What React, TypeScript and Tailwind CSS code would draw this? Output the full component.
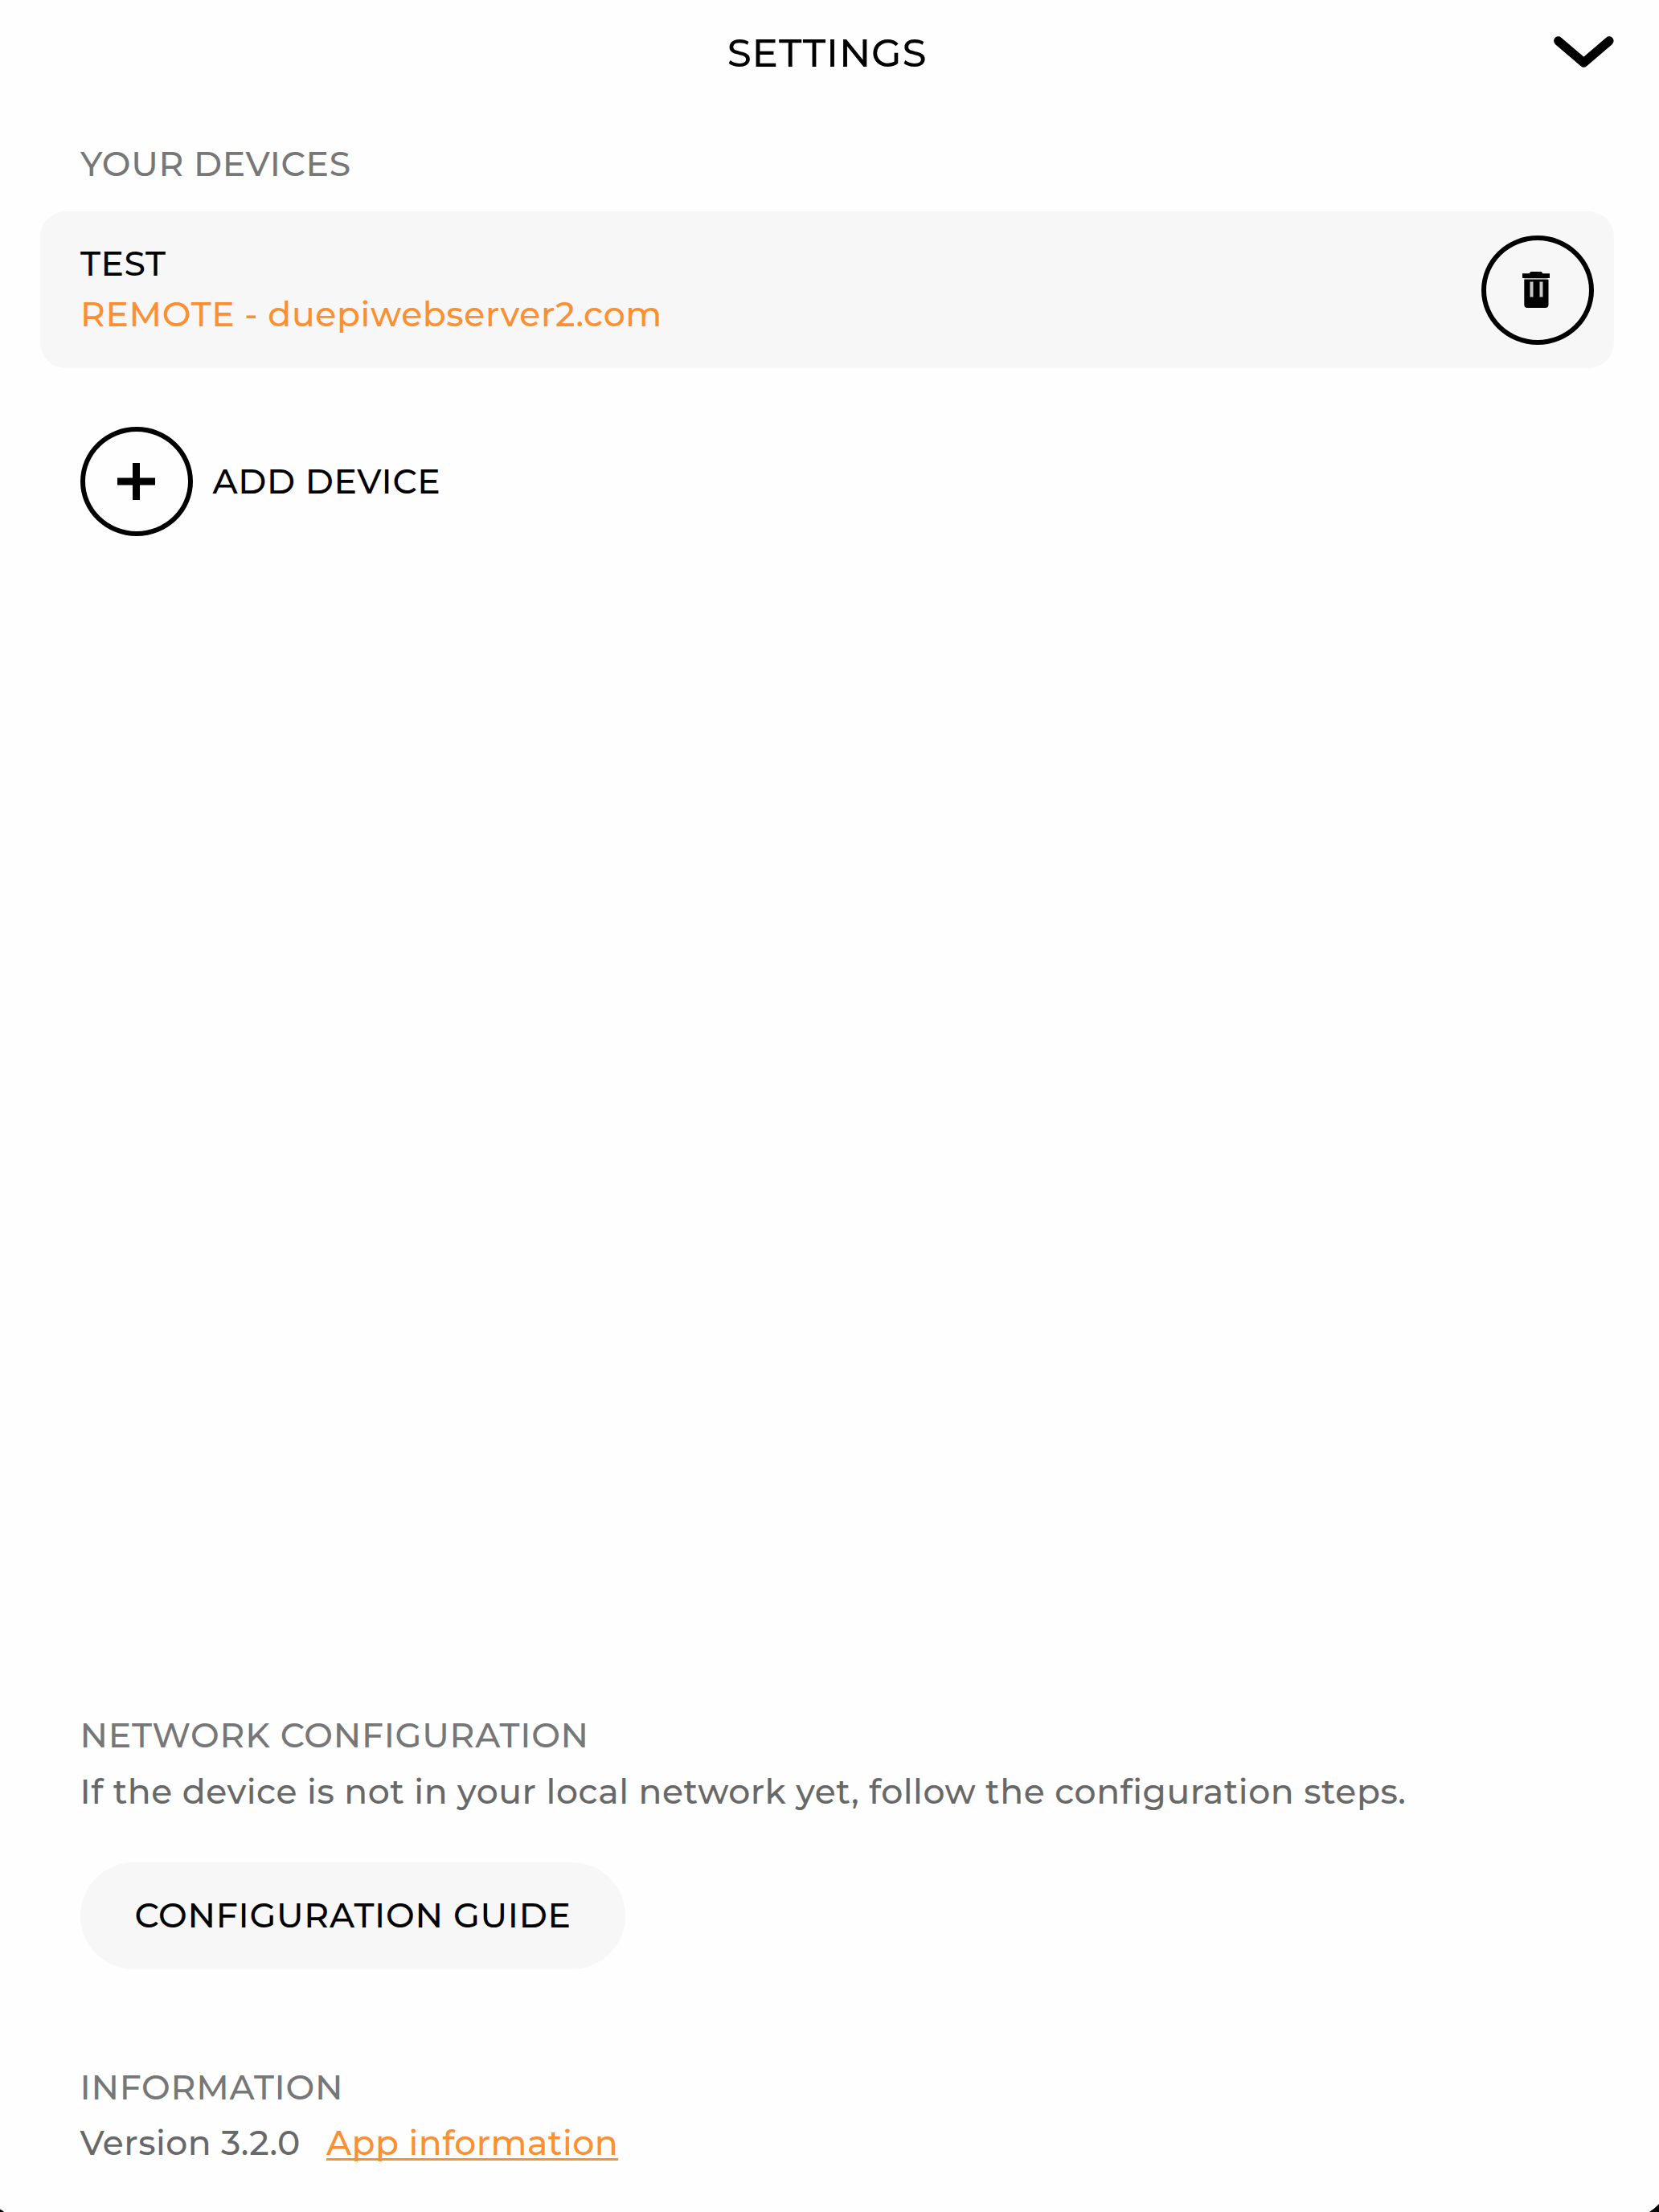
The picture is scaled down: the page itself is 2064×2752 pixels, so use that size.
import type { ReactNode } from 'react'

import clsx from 'clsx'

const devices = [
  { name: 'TEST', connection: 'REMOTE', host: 'duepiwebserver2.com' },
]

const ChevronDown = () => (
  <svg width="75" height="40" viewBox="0 0 75 40" fill="none">
    <path
      d="M5.7 5.9 37.4 33 69 5.9"
      stroke="black"
      strokeWidth="11.2"
      strokeLinecap="round"
      strokeLinejoin="round"
    />
  </svg>
)

const TrashIcon = () => (
  <svg width="34" height="45" viewBox="0 0 34 45" className="mr-[5px]">
    <path d="M10.5 0h13l2 2.3H34V8H0V2.3h8.5z" />
    <path d="M2.5 8h29v2h-29z" fill="#b0b0b0" />
    <path d="M2.3 9.7h30.2V41a4 4 0 0 1-4 4H6.3a4 4 0 0 1-4-4z" />
    <path d="M9.5 12.5h4v19h-4zM21.5 12.5h4v19h-4z" fill="#c8c8c8" />
  </svg>
)

const PlusIcon = () => (
  <svg width="47" height="46" viewBox="0 0 47 46">
    <path d="M19 0h9v18.5h19v9H28V46h-9V27.5H0v-9h19z" />
  </svg>
)

const RoundButton = ({ label, children }: { label: string; children: ReactNode }) => (
  <button
    aria-label={label}
    className="flex h-[136px] w-[140px] shrink-0 items-center justify-center rounded-[50%] border-[6px] border-black"
  >
    {children}
  </button>
)

const Heading = ({ className, children }: { className?: string; children: ReactNode }) => (
  <h2 className={clsx('text-[#777]', className)}>{children}</h2>
)

export default function App() {
  return (
    <div className="relative flex h-[2752px] w-[2064px] flex-col overflow-hidden bg-[#fefefe] font-['Montserrat','Inter',sans-serif] text-[42.5px] font-medium text-black">
      <header className="grid h-[132px] grid-cols-[1fr_auto_1fr] items-center pr-14 pl-[50px]">
        <h1 className="col-start-2 pt-px text-[48.5px] tracking-[0.83px]">SETTINGS</h1>
        <button aria-label="Close" className="justify-self-end pb-[3px]">
          <ChevronDown />
        </button>
      </header>

      <section className="mt-[42px]">
        <Heading className="ml-[100px] leading-[60px] tracking-[0.64px]">YOUR DEVICES</Heading>
        <ul className="mt-[29px] mr-14 ml-[50px]">
          {devices.map(device => (
            <li
              key={device.name}
              className="flex h-[195px] items-center justify-between rounded-[32px] bg-[#f7f7f7] pr-[25px] pl-[50px]"
            >
              <div className="pb-0.5 leading-[63px]">
                <p className="tracking-[0.5px]">{device.name}</p>
                <p className="tracking-[0.61px] text-[#fb9033]">
                  {device.connection} - {device.host}
                </p>
              </div>
              <RoundButton label="Delete device">
                <TrashIcon />
              </RoundButton>
            </li>
          ))}
        </ul>
        <div className="mt-[73px] ml-[99.5px] flex items-center gap-[25px]">
          <RoundButton label="Add device">
            <PlusIcon />
          </RoundButton>
          <span className="pt-0.5 tracking-[0.65px]">ADD DEVICE</span>
        </div>
      </section>

      <section className="mt-auto ml-[99.5px] leading-[70px]">
        <Heading className="tracking-[0.75px]">NETWORK CONFIGURATION</Heading>
        <p className="tracking-[0.53px] text-[#686868]">
          If the device is not in your local network yet, follow the configuration steps.
        </p>
        <button className="mt-[53px] flex h-[133px] w-[678.5px] items-center rounded-full bg-[#f7f7f7] pb-px pl-[68px] tracking-[0.75px]">
          CONFIGURATION GUIDE
        </button>
      </section>

      <section className="mt-28 mb-[51px] ml-[99.5px] leading-[70px]">
        <Heading className="tracking-[0.75px]">INFORMATION</Heading>
        <div className="-mt-px flex gap-[32px]">
          <span className="tracking-[0.45px] text-[#686868]">Version 3.2.0</span>
          <a
            href="#"
            className="tracking-[0.5px] text-[#fb9033] underline decoration-[3px] underline-offset-[4px] [text-decoration-skip-ink:none]"
          >
            App information
          </a>
        </div>
      </section>

      {/* rounded screen corners */}
      <svg width="5" height="4" viewBox="0 0 5 4" className="absolute bottom-0 left-0">
        <path d="M0 0.5q3 1 5 3.5H0z" />
      </svg>
      <svg width="12" height="10" viewBox="0 0 12 10" className="absolute right-0 bottom-0">
        <path d="M12 0Q7 5.5 0 10h12z" />
      </svg>
    </div>
  )
}
